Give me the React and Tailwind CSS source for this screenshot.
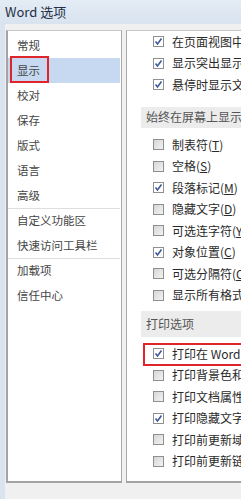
const navGroups = [
  ['常规', '显示', '校对', '保存', '版式', '语言', '高级'],
  ['自定义功能区', '快速访问工具栏'],
  ['加载项', '信任中心'],
];

const Checkbox = ({ checked }) => (
  <span
    className={
      'flex h-[11px] w-[11px] shrink-0 items-center justify-center border border-[#8f8f8f] ' +
      (checked ? 'bg-white' : 'bg-gradient-to-br from-[#d6d6d6] to-[#f3f3f3]')
    }
  >
    {checked && (
      <svg width="9" height="9" viewBox="0 0 9 9">
        <path d="M1.5 4.5 L3.5 7 L7.5 1.5" fill="none" stroke="#3d5a9a" strokeWidth="1.6" />
      </svg>
    )}
  </span>
);

const Option = ({ checked, children, boxed }) => (
  <div className="relative flex h-[21.5px] items-center pl-[26px]">
    {boxed && (
      <div className="absolute left-[16px] top-[0px] h-[23px] w-[110px] border-2 border-[#e0242c]" />
    )}
    <Checkbox checked={checked} />
    <span className="ml-[8px] whitespace-nowrap text-[12px] text-[#2a2a2a]">{children}</span>
  </div>
);

const Section = ({ children, className }) => (
  <div
    className={
      'ml-[14px] flex items-center bg-[#ececec] pl-[5px] whitespace-nowrap text-[12px] text-[#555] ' +
      className
    }
  >
    {children}
  </div>
);

const Key = ({ k }) => (
  <>
    (<u>{k}</u>)
  </>
);

export default function App() {
  return (
    <div
      className="flex h-[499px] w-[241px] flex-col overflow-hidden bg-[#f0f0f0]"
      style={{ fontFamily: '"Noto Sans CJK SC", "Noto Sans", sans-serif' }}
    >
      <div className="flex h-[24px] shrink-0 items-center bg-gradient-to-b from-[#e4ecf5] to-[#d8e3ef] pl-[5px] text-[13px] text-[#1f2f45]">
        Word 选项
      </div>
      <div className="flex flex-1 border-l-[5px] border-[#dae4f0] pt-[6px] pb-[16px]">
        <div className="ml-[1px] w-[116px] shrink-0 border border-t-[#c7c7c7] border-r-[#a8a8a8] border-b-2 border-b-[#a3a3a3] border-l-2 border-l-[#a3a3a3] bg-white pt-[2px] pr-px">
          {navGroups.map((group, gi) =>
            group.map((name, i) => (
              <div
                key={name}
                className={
                  'relative flex h-[25px] items-center pl-[9px] text-[11.5px] text-[#454545] ' +
                  (gi > 0 && i === 0 ? 'border-t border-[#dedede] ' : '') +
                  (name === '显示' ? 'bg-[#c6d9f1]' : '')
                }
              >
                {name}
                {name === '显示' && (
                  <div className="absolute -top-[2px] left-[2px] h-[27px] w-[39px] border-2 border-[#e0242c]" />
                )}
              </div>
            ))
          )}
        </div>
        <div className="ml-[4px] flex-1 border border-r-0 border-t-[#c7c7c7] border-l-[#a8a8a8] border-b-2 border-b-[#a3a3a3] bg-white">
          <Option checked>在页面视图中显示</Option>
          <Option checked>显示突出显示标记</Option>
          <Option checked>悬停时显示文档</Option>
          <Section className="mt-[11px] mb-[6px] h-[21.5px]">始终在屏幕上显示这些格式标记</Section>
          <Option>制表符<Key k="T" /></Option>
          <Option>空格<Key k="S" /></Option>
          <Option checked>段落标记<Key k="M" /></Option>
          <Option>隐藏文字<Key k="D" /></Option>
          <Option>可选连字符<Key k="Y" /></Option>
          <Option checked>对象位置<Key k="C" /></Option>
          <Option>可选分隔符<Key k="O" /></Option>
          <Option>显示所有格式标记</Option>
          <Section className="mt-[5px] mb-[6px] h-[26px]">打印选项</Section>
          <Option checked boxed>打印在 Word 中创建的图形</Option>
          <Option>打印背景色和图像</Option>
          <Option>打印文档属性(P)</Option>
          <Option checked>打印隐藏文字(X)</Option>
          <Option>打印前更新域(F)</Option>
          <Option>打印前更新链接数据</Option>
        </div>
      </div>
    </div>
  );
}
